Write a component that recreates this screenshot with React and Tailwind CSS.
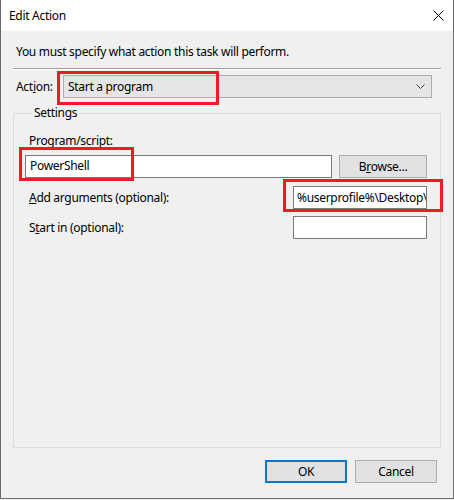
import React from "react";

const font = { fontFamily: '"Noto Sans", "Open Sans", sans-serif' };

function RedMark({ className }) {
  return (
    <div
      className={`absolute border-[3px] border-[#ed1c24] pointer-events-none ${className}`}
    />
  );
}

function TextBox({ value, className }) {
  return (
    <div
      className={`h-[23px] bg-white border border-[#7a7a7a] flex items-center px-[4px] text-[12px] text-black whitespace-nowrap overflow-hidden ${className}`}
    >
      {value}
    </div>
  );
}

function Button({ children, primary, className }) {
  return (
    <button
      className={`h-[23px] bg-[#e1e1e1] text-[12px] text-black flex items-center justify-center ${
        primary ? "border-2 border-[#0078d7]" : "border border-[#adadad]"
      } ${className}`}
    >
      {children}
    </button>
  );
}

export default function App() {
  return (
    <div
      className="w-[454px] h-[500px] bg-[#f0f0f0] text-black text-[12px] leading-[16px] tracking-[-0.3px]"
      style={font}
    >
      <div className="w-[454px] h-[499px] flex flex-col border-l border-r border-b border-[#6b6b6b]">
        {/* title bar */}
        <div className="h-[31px] bg-white flex items-center justify-between pl-[8px] pr-[9px]">
          <span className="text-[12px] text-black">Edit Action</span>
          <svg width="11" height="11" viewBox="0 0 11 11">
            <path d="M0.5 0.5 L10.5 10.5 M10.5 0.5 L0.5 10.5" stroke="#000" strokeWidth="1" />
          </svg>
        </div>

        {/* body */}
        <div className="flex-1 flex flex-col px-[12px] pt-[13px] pb-[15px]">
          <p className="pl-[3px]">You must specify what action this task will perform.</p>

          <div className="mt-[8px] h-[2px] border-t border-[#a0a0a0] border-b border-b-white" />

          <div className="mt-[5px] flex items-center">
            <span className="pl-[3px] w-[50px]">
              Act<span className="underline">i</span>on:
            </span>
            <div className="relative w-[369px] h-[23px] bg-[#e5e5e5] border border-[#adadad] flex items-center justify-between pl-[4px] pr-[6px]">
              <span>Start a program</span>
              <svg width="9" height="6" viewBox="0 0 9 6">
                <path d="M0.5 0.5 L4.5 4.5 L8.5 0.5" fill="none" stroke="#444" strokeWidth="1" />
              </svg>
              <RedMark className="left-[-7px] top-[-5px] w-[162px] h-[34px]" />
            </div>
          </div>

          <fieldset className="mt-[7px] flex-1 border border-[#dcdcdc] pl-[11px] pr-[13px] pb-[10px]">
            <legend className="ml-[7px] px-[2px]">Settings</legend>

            <p className="mt-[12px] pl-[4px]">Program/script:</p>
            <div className="mt-[5px] flex items-center">
              <div className="relative">
                <TextBox value="PowerShell" className="w-[307px]" />
                <RedMark className="left-[-6px] top-[-8px] w-[115px] h-[34px]" />
              </div>
              <Button className="ml-[7px] w-[88px] mt-[1px]">
                B<span className="underline">r</span>owse...
              </Button>
            </div>

            <div className="mt-[8px] flex items-center justify-between">
              <span className="pl-[4px]">
                <span className="underline">A</span>dd arguments (optional):
              </span>
              <div className="relative">
                <TextBox value="%userprofile%\Desktop\" className="w-[134px] pl-[3px]" />
                <RedMark className="left-[-10px] top-[-7px] w-[160px] h-[33px]" />
              </div>
            </div>

            <div className="mt-[7px] flex items-center justify-between">
              <span className="pl-[4px]">
                S<span className="underline">t</span>art in (optional):
              </span>
              <TextBox value="" className="w-[134px]" />
            </div>
          </fieldset>

          <div className="mt-[12px] flex justify-end gap-[8px] pr-[4px]">
            <Button primary className="w-[82px]">
              OK
            </Button>
            <Button className="w-[82px]">Cancel</Button>
          </div>
        </div>
      </div>
    </div>
  );
}
